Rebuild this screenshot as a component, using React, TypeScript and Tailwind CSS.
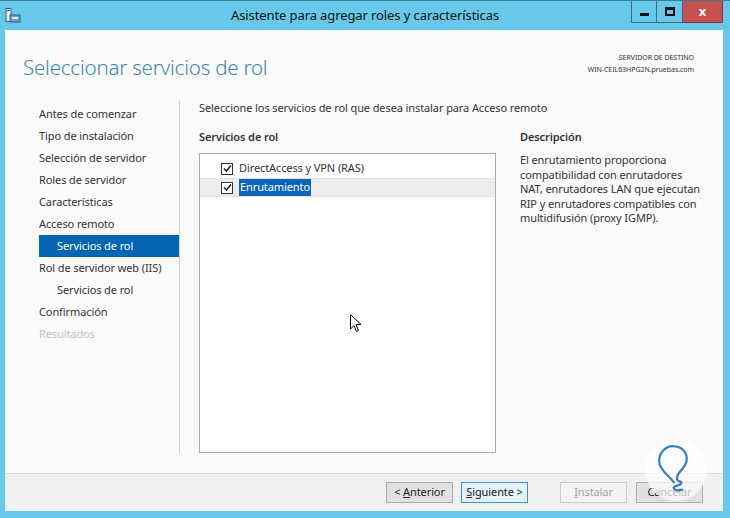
import React from 'react';

const steps: { label: string; sub?: boolean; active?: boolean; disabled?: boolean }[] = [
  { label: 'Antes de comenzar' },
  { label: 'Tipo de instalación' },
  { label: 'Selección de servidor' },
  { label: 'Roles de servidor' },
  { label: 'Características' },
  { label: 'Acceso remoto' },
  { label: 'Servicios de rol', sub: true, active: true },
  { label: 'Rol de servidor web (IIS)' },
  { label: 'Servicios de rol', sub: true },
  { label: 'Confirmación' },
  { label: 'Resultados', disabled: true },
];

function Check() {
  return (
    <span className="flex h-[12px] w-[12px] items-center justify-center border border-[#333] bg-white">
      <svg width="9" height="9" viewBox="0 0 9 9">
        <path d="M1 4.5 L3.5 7 L8 1.5" fill="none" stroke="#222" strokeWidth="1.6" />
      </svg>
    </span>
  );
}

function WinButton({ children, variant }: { children: React.ReactNode; variant?: 'focus' | 'disabled' }) {
  const cls =
    variant === 'focus'
      ? 'border-[#3c8fd9] bg-[#e5f1fb] text-[#222]'
      : variant === 'disabled'
        ? 'border-[#cccccc] bg-[#f4f4f4] text-[#a3a3a3]'
        : 'border-[#adadad] bg-[#e1e1e1] text-[#222]';
  return (
    <button className={`flex h-[21px] w-[67px] items-center justify-center border text-[11px] ${cls}`}>
      {children}
    </button>
  );
}

export default function App() {
  return (
    <div
      className="relative flex h-[518px] w-[730px] flex-col overflow-hidden border-t border-[#3d7f99] bg-[#67c9ea] tracking-[-0.1px]"
      style={{ fontFamily: '"Noto Sans", "Open Sans", sans-serif' }}
    >
      {/* title bar */}
      <div className="relative flex h-[29px] shrink-0 items-center justify-center">
        <svg className="absolute left-[5px] top-[7px]" width="16" height="15" viewBox="0 0 16 15">
          <rect x="1" y="0.5" width="5" height="13" fill="#eef6fb" stroke="#2c5f86" />
          <rect x="2" y="2" width="3" height="1" fill="#2c5f86" />
          <rect x="5" y="7" width="10" height="7" fill="#6f9fc0" stroke="#2c5f86" />
          <rect x="7" y="9" width="6" height="2" fill="#d7e9f5" />
        </svg>
        <span className="text-[13px] text-[#111]">Asistente para agregar roles y características</span>
        <div className="absolute right-[7px] top-0 flex h-[22px]">
          <div className="flex w-[26px] items-center justify-center border border-t-0 border-[#3a6d82]">
            <span className="mt-[5px] h-[3px] w-[9px] bg-[#111]" />
          </div>
          <div className="flex w-[26px] items-center justify-center border border-l-0 border-t-0 border-[#3a6d82]">
            <span className="h-[9px] w-[10px] border-2 border-t-[3px] border-[#111]" />
          </div>
          <div className="flex w-[40px] items-center justify-center border border-l-0 border-t-0 border-[#7a3a3a] bg-[#c75050] text-[13px] font-bold text-white">
            x
          </div>
        </div>
      </div>

      {/* client */}
      <div className="mb-[7px] ml-[5px] mr-[7px] flex flex-1 flex-col bg-[#fafafa]">
        <div className="flex h-[70px] shrink-0 items-start justify-between pl-[18px] pr-[29px]">
          <h1 className="mt-[22px] text-[20.5px] font-light tracking-[-0.2px] text-[#3d87ad]">
            Seleccionar servicios de rol
          </h1>
          <div className="mt-[22px] text-right text-[7px] leading-[12px] tracking-[-0.05px] text-[#333]">
            <div>SERVIDOR DE DESTINO</div>
            <div>WIN-CEIL63HPG2N.pruebas.com</div>
          </div>
        </div>

        <div className="flex flex-1 pb-[20px] text-[11px] text-[#333]">
          <nav className="w-[175px] shrink-0 border-r border-[#d0d0d0] pl-[34px] pt-[3px]">
            {steps.map((s, i) => (
              <div
                key={i}
                className={`flex h-[22px] items-center ${s.sub ? 'pl-[18px]' : ''} ${
                  s.active ? 'bg-[#0366b3] text-white' : s.disabled ? 'text-[#c3c3c3]' : ''
                }`}
              >
                {s.label}
              </div>
            ))}
          </nav>

          <section className="flex flex-1 flex-col pl-[19px]">
            <p className="leading-[16px]">Seleccione los servicios de rol que desea instalar para Acceso remoto</p>
            <div className="mt-[13px] flex flex-1 gap-[24px]">
              <div className="flex w-[297px] flex-col">
                <h2 className="mb-[8px] font-semibold leading-[16px]">Servicios de rol</h2>
                <div className="flex-1 border border-[#ababab] bg-white pt-[5px]">
                  <div className="flex h-[19px] items-center gap-[6px] pl-[21px]">
                    <Check />
                    <span>DirectAccess y VPN (RAS)</span>
                  </div>
                  <div className="flex h-[19px] items-center gap-[6px] border-y border-[#e2e2e2] bg-[#ededed] pl-[21px]">
                    <Check />
                    <span className="bg-[#0a64b8] px-[1px] text-white">Enrutamiento</span>
                  </div>
                </div>
              </div>
              <div className="flex flex-col">
                <h2 className="mb-[8px] font-semibold leading-[16px]">Descripción</h2>
                <p className="leading-[14.5px]">
                  El enrutamiento proporciona
                  <br />
                  compatibilidad con enrutadores
                  <br />
                  NAT, enrutadores LAN que ejecutan
                  <br />
                  RIP y enrutadores compatibles con
                  <br />
                  multidifusión (proxy IGMP).
                </p>
              </div>
            </div>
          </section>
        </div>

        <footer className="flex h-[38px] shrink-0 items-center justify-end border-t border-[#d9d9d9] bg-[#f0f0f0] pr-[20px]">
          <div className="flex gap-[8px]">
            <WinButton>
              &lt;&nbsp;<u>A</u>nterior
            </WinButton>
            <WinButton variant="focus">
              <u>S</u>iguiente &gt;
            </WinButton>
          </div>
          <div className="ml-[32px] flex gap-[9px]">
            <WinButton variant="disabled">
              <u>I</u>nstalar
            </WinButton>
            <WinButton>Cancelar</WinButton>
          </div>
        </footer>
      </div>

      {/* mouse cursor */}
      <svg className="absolute left-[350px] top-[313px]" width="12" height="19" viewBox="0 0 12 19">
        <path d="M0.5 0.5 L0.5 15 L4 11.5 L6.5 17.5 L8.5 16.5 L6 10.5 L11 10.5 Z" fill="#fff" stroke="#000" strokeWidth="1" />
      </svg>

      {/* watermark logo */}
      <svg className="absolute left-[643px] top-[436px]" width="66" height="66" viewBox="0 0 64 64">
        <circle cx="32" cy="32" r="30" fill="#ffffff" fillOpacity="0.7" />
        <path
          d="M30 44 C26 38 18 34 16 26 C14 16 22 8 31 9 C40 10 45 18 41 27 C38 33 32 35 33 41 C34 44 38 42 37 45 C36 48 28 47 30 50 C32 53 38 51 38 51"
          fill="none"
          stroke="#3a7fc4"
          strokeWidth="2.2"
          strokeLinecap="round"
        />
      </svg>
    </div>
  );
}
